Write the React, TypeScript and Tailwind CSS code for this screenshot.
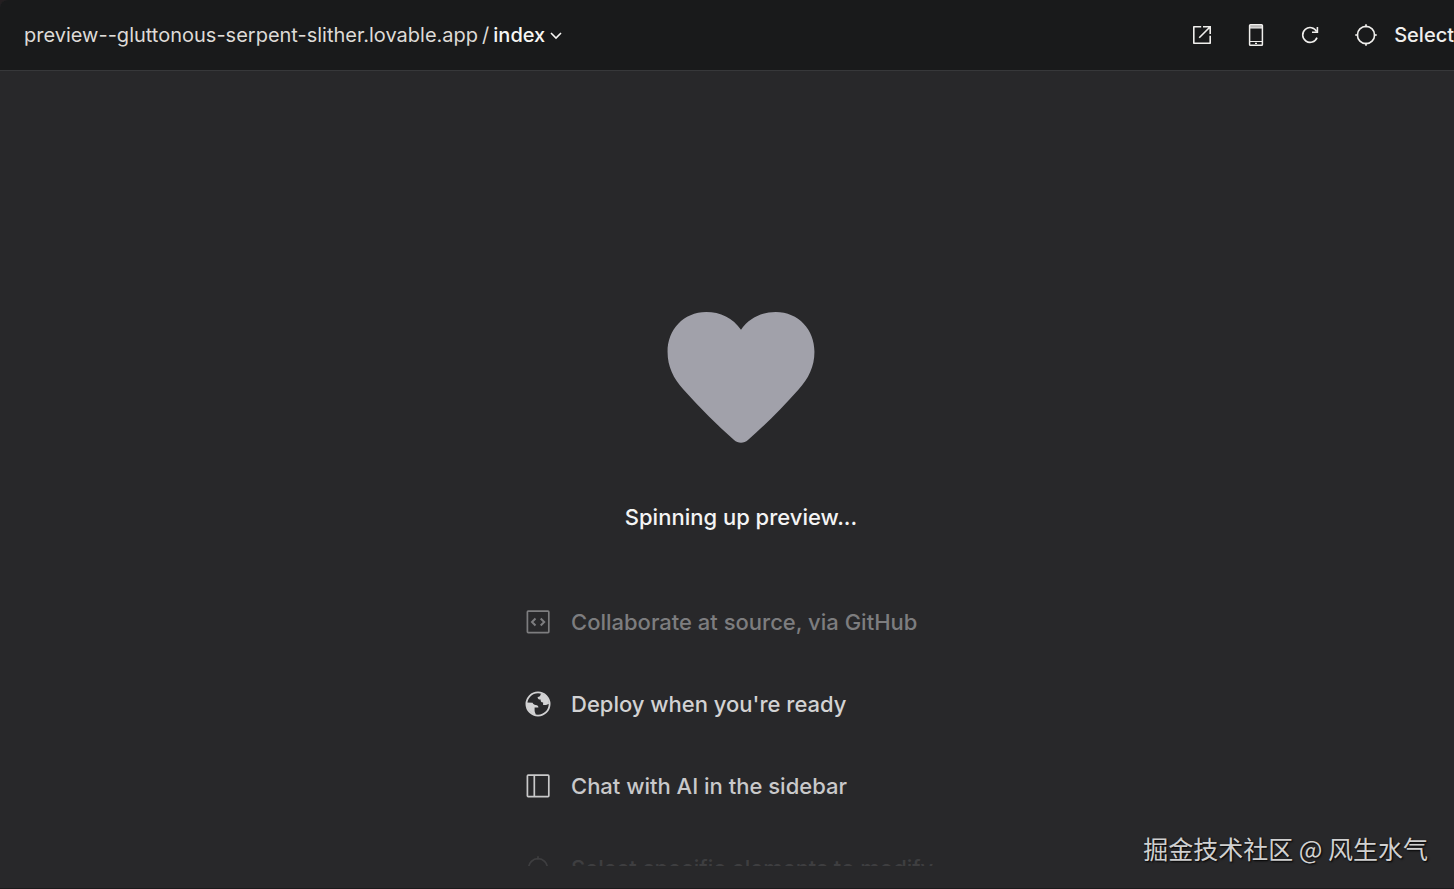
import type { ReactNode } from 'react'

interface Tip {
  label: string
  icon: ReactNode
  className: string
}

function ExternalLinkIcon() {
  return (
    <svg width="24" height="24" viewBox="0 0 24 24" fill="none" stroke="currentColor" strokeWidth="1.6">
      <path d="M11.2 3.8H3.8v16.4h16.4V12.8" strokeLinejoin="round" />
      <path d="M13 3.8h7.2V11M20.2 3.8L9.2 14.8" />
    </svg>
  )
}

function PhoneIcon() {
  return (
    <svg width="24" height="24" viewBox="0 0 24 24" fill="none" stroke="currentColor" strokeWidth="1.5">
      <rect x="5.6" y="1.75" width="12.8" height="20.5" rx="0.8" />
      <path d="M6 2.2h12v2.8H6z" fill="currentColor" stroke="none" opacity="0.75" />
      <path d="M6 5h12M6 18.5h12" strokeWidth="1.2" />
      <path d="M11 20.4h2" strokeWidth="1.2" />
    </svg>
  )
}

function RefreshIcon() {
  return (
    <svg width="24" height="24" viewBox="0 0 24 24" fill="none" stroke="currentColor" strokeWidth="1.6">
      <path d="M19 14.6a7.4 7.4 0 1 1-.3-6" />
      <path d="M19.4 4v5.2h-5.4" />
    </svg>
  )
}

function TargetIcon({ size }: { size: number }) {
  return (
    <svg width={size} height={size} viewBox="0 0 24 24" fill="none" stroke="currentColor" strokeWidth="1.6">
      <circle cx="12" cy="12" r="8.6" />
      <path d="M12 1.2v3M12 19.8v3M1.2 12h3M19.8 12h3" />
    </svg>
  )
}

function CodeBoxIcon() {
  return (
    <svg width="26" height="26" viewBox="0 0 26 26" fill="none" stroke="currentColor" strokeWidth="1.7">
      <rect x="2.4" y="2.2" width="21.4" height="21.4" rx="0.8" />
      <path d="M10.5 9.5L7 13l3.5 3.5M15.7 9.5l3.5 3.5l-3.5 3.5" strokeWidth="2" />
    </svg>
  )
}

function GlobeIcon() {
  return (
    <svg width="26" height="26" viewBox="0 0 26 26" fill="none">
      <circle cx="13" cy="13" r="11.6" stroke="currentColor" strokeWidth="1.8" />
      <path
        d="M15.8 2.2c0 2.4-1 3.6-3.2 3.8.2 2 .8 2.6 3 2.6 0 2 .5 2.8 2.5 2.8v2.6c2.6.3 3.8 0 5.9-1.2C24 7 20.4 3 15.8 2.2z"
        fill="currentColor"
      />
      <path
        d="M2 11.6l5.6.1c.6 1.4 1.6 2.2 3 2.2 2 0 2.8.8 2.8 2.6H9.6v2.8c0 1.4.4 2.4 1.4 4.4C5.6 22.6 2 18.8 1.6 13z"
        fill="currentColor"
      />
    </svg>
  )
}

function SidebarIcon() {
  return (
    <svg width="26" height="26" viewBox="0 0 26 26" fill="none" stroke="currentColor" strokeWidth="1.7">
      <rect x="2.4" y="2.2" width="21.4" height="21.4" rx="0.8" />
      <path d="M9.3 2.5v21" />
    </svg>
  )
}

const TIPS: Tip[] = [
  { label: 'Collaborate at source, via GitHub', icon: <CodeBoxIcon />, className: 'text-[#7d7d7f]' },
  { label: "Deploy when you're ready", icon: <GlobeIcon />, className: 'text-[#d2d2d3]' },
  { label: 'Chat with AI in the sidebar', icon: <SidebarIcon />, className: 'text-[#c9c9ca]' },
  { label: 'Select specific elements to modify', icon: <TargetIcon size={26} />, className: 'text-[#3e3e40]' },
]

export default function App() {
  return (
    <div className="bg-[#241f21]">
      <div className="relative flex min-h-screen flex-col overflow-hidden rounded-tl-lg border-b border-[#1b1b1c] bg-[#28282a] font-['Inter',sans-serif]">
        <header className="flex items-center justify-between border-b border-[#37383a] bg-[#191a1b] py-5 pl-6 text-xl">
          <div className="flex h-[30px] items-center whitespace-nowrap text-[#dedbd7]">
            <a href="#preview">preview--gluttonous-serpent-slither.lovable.app</a>
            <span className="px-1">/</span>
            <button className="flex items-center gap-1 font-medium text-[#f7f6f4]">
              index
              <svg width="14" height="14" viewBox="0 0 14 14" fill="none" stroke="currentColor" strokeWidth="1.6">
                <path d="M2 5l5 5l5-5" />
              </svg>
            </button>
          </div>
          <div className="flex items-center gap-[30px] text-[#f0efed]">
            <button aria-label="Open in new tab"><ExternalLinkIcon /></button>
            <button aria-label="Mobile view"><PhoneIcon /></button>
            <button aria-label="Reload"><RefreshIcon /></button>
            <button className="ml-0.5 flex items-center gap-4 font-medium">
              <TargetIcon size={24} />
              Select
            </button>
          </div>
        </header>

        <main className="flex flex-1 flex-col items-center pl-7 pt-60 font-medium">
          <svg width="148" height="132" viewBox="0 -1 148 133" className="text-[#a1a1aa]">
            <path
              d="M74 18C66 6 53 0 39 0C16 0 0 18 0 40C0 55 6 67 16 78C33 97 50 114 67 129C71 132.5 77 132.5 81 129C98 114 115 97 132 78C142 67 148 55 148 40C148 18 132 0 109 0C95 0 82 6 74 18Z"
              fill="currentColor"
            />
          </svg>
          <p className="mt-14 text-[22px] leading-9 text-[#f4f4f4]">Spinning up preview...</p>
          <ul className="mt-[46px] h-[285px] w-[432px] overflow-hidden text-[22px]">
            {TIPS.map((tip) => (
              <li key={tip.label} className={`flex h-[82px] items-center gap-5 whitespace-nowrap ${tip.className}`}>
                {tip.icon}
                {tip.label}
              </li>
            ))}
          </ul>
        </main>

        <p className="absolute bottom-[22px] right-[26px] font-['Noto_Sans_CJK_SC',sans-serif] text-[25px] leading-9 text-[#d0d0d0] [text-shadow:1px_1px_2px_#000]">
          掘金技术社区 @ 风生水气
        </p>
      </div>
    </div>
  )
}
